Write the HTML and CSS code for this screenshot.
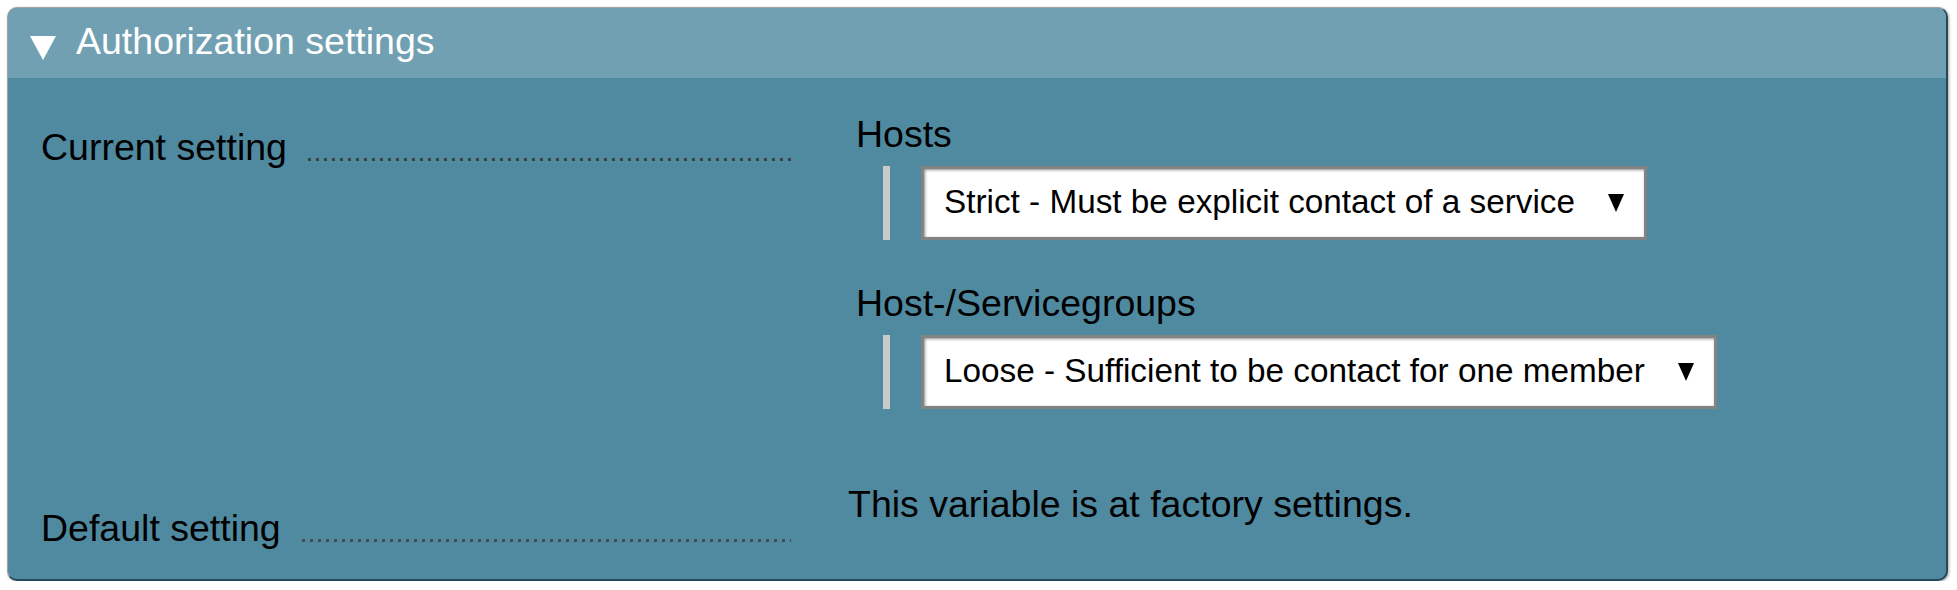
FILE: index.html
```html
<!DOCTYPE html>
<html lang="en">
<head>
    <meta charset="UTF-8">
    <meta name="viewport" content="width=device-width, initial-scale=1.0">
    <title>Authorization settings</title>
    <link rel="stylesheet" href="styles.css">
</head>
<body>
    <div class="foldable">
        <div class="foldable-header">
            <span class="fold-arrow"></span>
            <span class="foldable-title">Authorization settings</span>
        </div>
        <div class="foldable-body">
            <div class="setting-row row-current">
                <div class="legend">
                    <span class="legend-text">Current setting</span>
                    <span class="dots"></span>
                </div>
                <div class="content">
                    <div class="field">
                        <div class="field-title">Hosts</div>
                        <div class="field-input">
                            <span class="indent-bar"></span>
                            <div class="select">
                                <span class="select-text">Strict - Must be explicit contact of a service</span>
                                <span class="select-arrow"></span>
                            </div>
                        </div>
                    </div>
                    <div class="field">
                        <div class="field-title">Host-/Servicegroups</div>
                        <div class="field-input">
                            <span class="indent-bar"></span>
                            <div class="select">
                                <span class="select-text">Loose - Sufficient to be contact for one member</span>
                                <span class="select-arrow"></span>
                            </div>
                        </div>
                    </div>
                </div>
            </div>
            <div class="setting-row row-default">
                <div class="legend">
                    <span class="legend-text">Default setting</span>
                    <span class="dots dots-thin"></span>
                </div>
                <div class="content">
                    <div class="factory">This variable is at factory settings.</div>
                </div>
            </div>
        </div>
    </div>
</body>
</html>
```

FILE: styles.css
```css
body {
    margin: 0;
    padding: 0;
    font-family: 'Liberation Sans', Arial, sans-serif;
    background: #fff;
    color: #000;
}
.foldable {
    box-sizing: border-box;
    width: 1941px;
    height: 574px;
    margin: 7px 0 0 7px;
    border-top: 1px solid #a3a3a3;
    border-left: 1px solid #a3a3a3;
    border-right: 2px solid #26495a;
    border-bottom: 2px solid #26495a;
    border-radius: 10px;
    overflow: hidden;
    background: #508aa0;
    box-shadow: 1px 1px 3px rgba(0, 0, 0, 0.35);
    display: flex;
    flex-direction: column;
}
.foldable-header {
    height: 70px;
    background: #72a0b3;
    display: flex;
    align-items: center;
    padding-left: 22px;
}
.fold-arrow {
    width: 0;
    height: 0;
    border-left: 13.5px solid transparent;
    border-right: 13.5px solid transparent;
    border-top: 24px solid #fff;
    margin-top: 10px;
    margin-right: 20px;
}
.foldable-title {
    color: #fff;
    font-size: 37.5px;
    line-height: 67px;
    padding-bottom: 4px;
}
.foldable-body {
    flex: 1;
    padding: 35px 0 0 33px;
}
.setting-row {
    display: grid;
    grid-template-columns: 750px 1fr;
    column-gap: 57px;
    font-size: 37.5px;
    line-height: 43px;
}
.row-default {
    margin-top: 74px;
}
.legend {
    display: flex;
    align-items: flex-end;
    align-self: start;
}
.row-current .legend {
    padding-top: 13px;
}
.row-default .legend {
    padding-top: 24px;
}
.dots {
    flex: 1;
    height: 3px;
    margin: 0 0 8px 21px;
    background: linear-gradient(to right, #3f3f3f 3px, transparent 3px) repeat-x left bottom / 8px 3px;
}
.dots-thin {
    opacity: 0.8;
}
.field {
    padding-left: 8px;
    margin-bottom: 42px;
}
.field:last-child {
    margin-bottom: 0;
}
.field-title {
    margin-bottom: 10px;
}
.field-input {
    display: flex;
    align-items: stretch;
}
.indent-bar {
    width: 7px;
    margin-left: 27px;
    margin-right: 31px;
    background: #c9c9c9;
}
.select {
    display: flex;
    align-items: center;
    height: 74px;
    box-sizing: border-box;
    padding: 0 20px 0 20px;
    border: 3px solid #838383;
    background: #fff;
    box-shadow: inset 1px 1px 3px rgba(0, 0, 0, 0.45);
    font-size: 33.3px;
}
.select-text {
    line-height: 68px;
    padding-bottom: 2px;
}
.select-arrow {
    width: 0;
    height: 0;
    border-left: 8.5px solid transparent;
    border-right: 8.5px solid transparent;
    border-top: 18px solid #000;
    margin-left: 33px;
}
```
